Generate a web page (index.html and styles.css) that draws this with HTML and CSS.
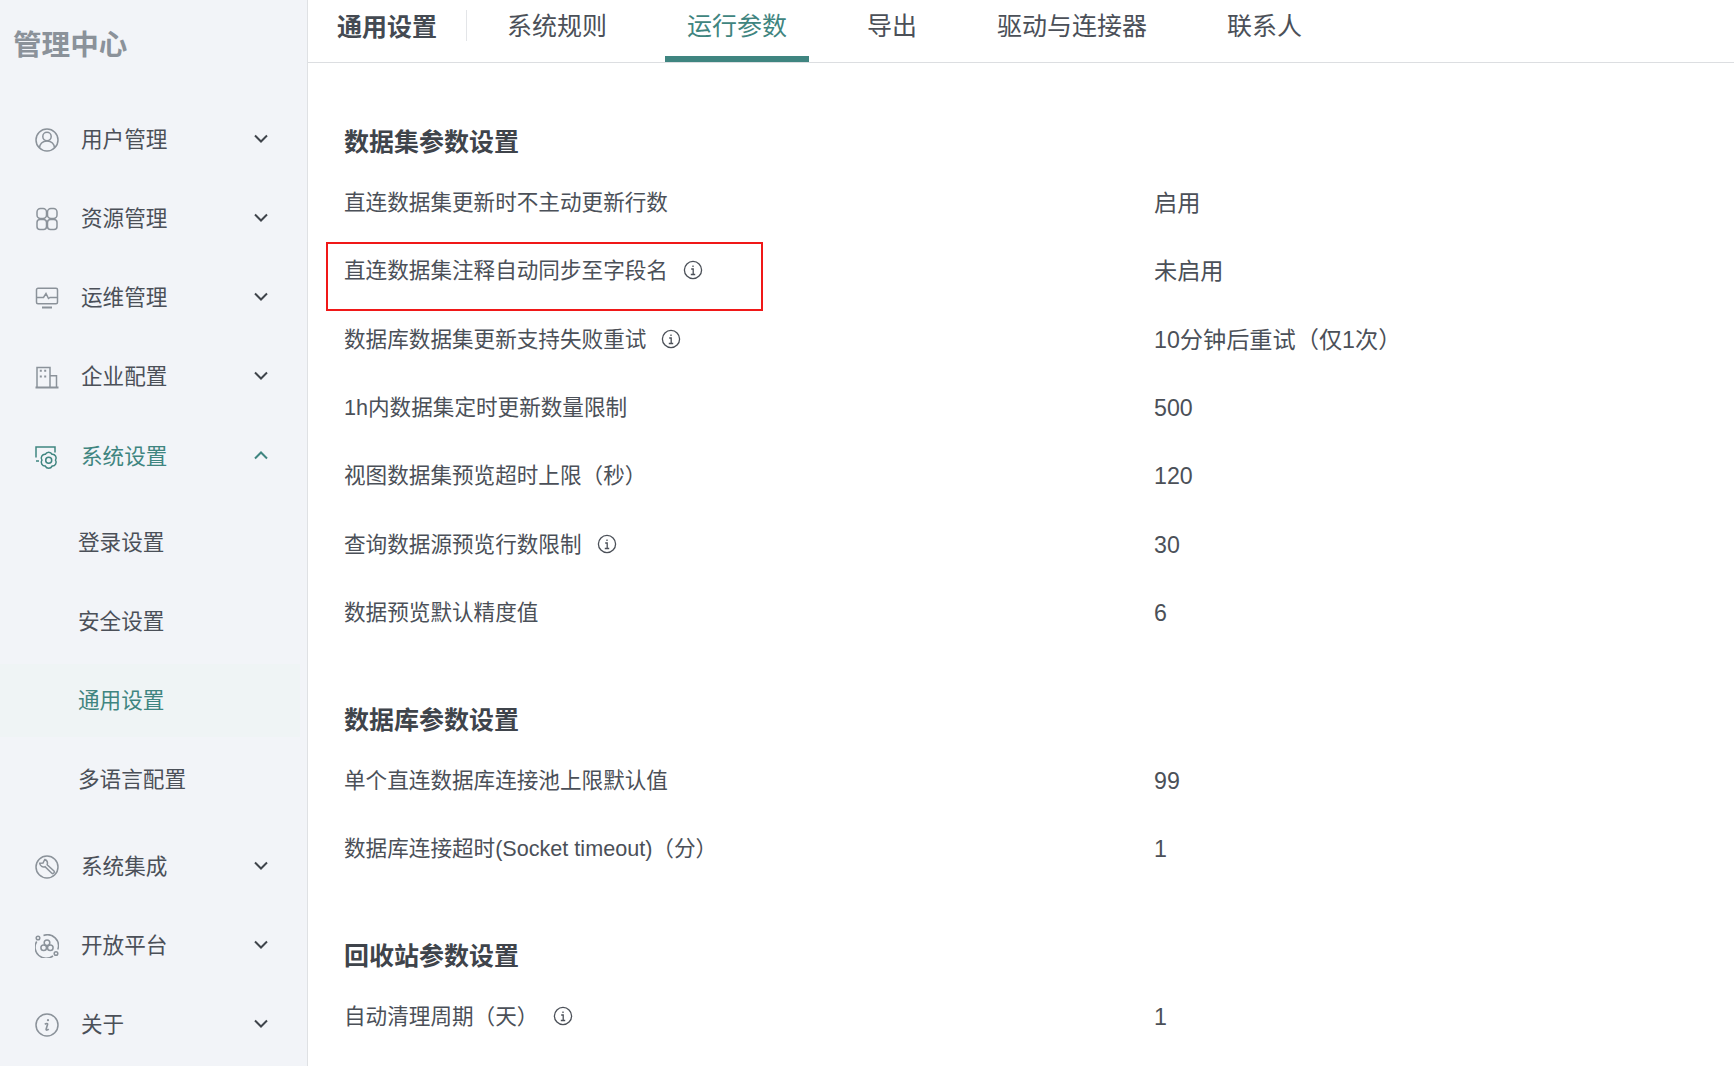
FILE: index.html
```html
<!DOCTYPE html>
<html lang="zh-CN">
<head>
    <meta charset="UTF-8">
    <title>管理中心</title>
    <link rel="stylesheet" href="styles.css">
</head>
<body>
    <div class="app">
        <aside class="sidebar">
            <div class="brand">管理中心</div>
            <ul class="menu">
                <li class="menu-item">
                    <svg class="menu-icon" viewBox="0 0 24 24"><circle cx="12" cy="12" r="11"/><circle cx="12" cy="8.500" r="4.200"/><path d="M4.500 20c0-4 3-7 7.500-7s7.500 3 7.500 7"/></svg>
                    <span class="menu-label">用户管理</span>
                    <svg class="chevron" viewBox="0 0 14 9"><path d="M1 1.500l6 6 6-6"/></svg>
                </li>
                <li class="menu-item">
                    <svg class="menu-icon" viewBox="0 0 24 24"><rect x="2" y="1.500" width="9.500" height="10" rx="3.500"/><rect x="12.500" y="1.500" width="9.500" height="10" rx="3.500"/><rect x="2" y="12.500" width="9.500" height="10" rx="3"/><rect x="12.500" y="12.500" width="9.500" height="10" rx="3"/></svg>
                    <span class="menu-label">资源管理</span>
                    <svg class="chevron" viewBox="0 0 14 9"><path d="M1 1.500l6 6 6-6"/></svg>
                </li>
                <li class="menu-item">
                    <svg class="menu-icon" viewBox="0 0 24 24"><rect x="1.500" y="2.300" width="21" height="15.500" rx="1.500"/><path d="M1.500 11.500h7l2.500-4 2.500 5 1.500-1h8"/><path d="M7 21.500h10" stroke-width="2"/></svg>
                    <span class="menu-label">运维管理</span>
                    <svg class="chevron" viewBox="0 0 14 9"><path d="M1 1.500l6 6 6-6"/></svg>
                </li>
                <li class="menu-item">
                    <svg class="menu-icon" viewBox="0 0 24 24"><path d="M.5 22.500h23" stroke-width="2"/><path d="M2 22V2.500h13V22M15 10.700h6.500V22"/><path d="M4.800 5.700h2M9.200 5.700h2M4.800 11.500h2M9.200 11.500h2" stroke-width="2"/></svg>
                    <span class="menu-label">企业配置</span>
                    <svg class="chevron" viewBox="0 0 14 9"><path d="M1 1.500l6 6 6-6"/></svg>
                </li>
                <li class="menu-item is-open">
                    <svg class="menu-icon" viewBox="0 0 24 24"><path d="M1 12.500V2h19v5.500M1 16h3"/><path d="M20.500 15.200A3.800 3.800 0 0 1 17.100 21.100 3.800 3.800 0 0 1 10.300 21.100 3.800 3.800 0 0 1 6.900 15.200 3.800 3.800 0 0 1 10.300 9.300 3.800 3.800 0 0 1 17.100 9.300 3.800 3.800 0 0 1 20.500 15.200z"/><circle cx="13.700" cy="15.200" r="3"/></svg>
                    <span class="menu-label">系统设置</span>
                    <svg class="chevron" viewBox="0 0 14 9"><path d="M1 7.500l6-6 6 6"/></svg>
                </li>
                <li>
                    <ul class="submenu">
                        <li class="submenu-item">登录设置</li>
                        <li class="submenu-item">安全设置</li>
                        <li class="submenu-item is-active">通用设置</li>
                        <li class="submenu-item">多语言配置</li>
                    </ul>
                </li>
                <li class="menu-item">
                    <svg class="menu-icon" viewBox="0 0 24 24"><circle cx="12" cy="12" r="11"/><path d="M10 4.500c1.900.9 2.800 3.300 2.200 5.300l6.800 6.200c1.200 1.400-.8 3.400-2.200 2.200l-6.800-6.500c-2.200.8-5-.4-5.300-3.500l3.300-.2 2-4z"/></svg>
                    <span class="menu-label">系统集成</span>
                    <svg class="chevron" viewBox="0 0 14 9"><path d="M1 1.500l6 6 6-6"/></svg>
                </li>
                <li class="menu-item">
                    <svg class="menu-icon" viewBox="0 0 24 24"><path d="M8.500 1.500A11 11 0 0 1 22.800 15.500M1.700 7.500A11 11 0 0 0 18 21.800"/><circle cx="3" cy="4" r="1.800"/><circle cx="21" cy="19.500" r="1.800"/><circle cx="12" cy="8.800" r="2.800"/><circle cx="8.700" cy="13.800" r="2.800"/><circle cx="15.300" cy="13.800" r="2.800"/></svg>
                    <span class="menu-label">开放平台</span>
                    <svg class="chevron" viewBox="0 0 14 9"><path d="M1 1.500l6 6 6-6"/></svg>
                </li>
                <li class="menu-item">
                    <svg class="menu-icon" viewBox="0 0 24 24"><circle cx="12" cy="12" r="11"/><circle class="icon-dot" cx="13" cy="7.200" r="1.100"/><path d="M9.800 11.300c1-.8 3-1.300 2.800 0l-1.500 5c-.2 1.300 1.500.8 2.600-.2" stroke-width="1.600"/></svg>
                    <span class="menu-label">关于</span>
                    <svg class="chevron" viewBox="0 0 14 9"><path d="M1 1.500l6 6 6-6"/></svg>
                </li>
            </ul>
        </aside>

        <main class="main">
            <nav class="tabs">
                <div class="tabs-title">通用设置</div>
                <div class="tab">系统规则</div>
                <div class="tab is-active">运行参数</div>
                <div class="tab">导出</div>
                <div class="tab">驱动与连接器</div>
                <div class="tab">联系人</div>
            </nav>

            <div class="content">
                <section class="group">
                    <h2>数据集参数设置</h2>
                    <div class="row"><div class="row-label">直连数据集更新时不主动更新行数</div><div class="row-value">启用</div></div>
                    <div class="row">
                        <div class="row-label">直连数据集注释自动同步至字段名
                            <svg class="info" viewBox="0 0 20 20"><circle cx="10" cy="10" r="8.600"/><path d="M10 5.600v1.400M8.200 9h2v5.500M7.800 14.500h4.400"/></svg>
                        </div>
                        <div class="row-value">未启用</div>
                        <span class="red-box"></span>
                    </div>
                    <div class="row">
                        <div class="row-label">数据库数据集更新支持失败重试
                            <svg class="info" viewBox="0 0 20 20"><circle cx="10" cy="10" r="8.600"/><path d="M10 5.600v1.400M8.200 9h2v5.500M7.800 14.500h4.400"/></svg>
                        </div>
                        <div class="row-value">10分钟后重试（仅1次）</div>
                    </div>
                    <div class="row"><div class="row-label">1h内数据集定时更新数量限制</div><div class="row-value">500</div></div>
                    <div class="row"><div class="row-label">视图数据集预览超时上限（秒）</div><div class="row-value">120</div></div>
                    <div class="row">
                        <div class="row-label">查询数据源预览行数限制
                            <svg class="info" viewBox="0 0 20 20"><circle cx="10" cy="10" r="8.600"/><path d="M10 5.600v1.400M8.200 9h2v5.500M7.800 14.500h4.400"/></svg>
                        </div>
                        <div class="row-value">30</div>
                    </div>
                    <div class="row"><div class="row-label">数据预览默认精度值</div><div class="row-value">6</div></div>
                </section>

                <section class="group">
                    <h2>数据库参数设置</h2>
                    <div class="row"><div class="row-label">单个直连数据库连接池上限默认值</div><div class="row-value">99</div></div>
                    <div class="row"><div class="row-label">数据库连接超时(Socket timeout)（分）</div><div class="row-value">1</div></div>
                </section>

                <section class="group">
                    <h2>回收站参数设置</h2>
                    <div class="row">
                        <div class="row-label">自动清理周期（天）
                            <svg class="info" viewBox="0 0 20 20"><circle cx="10" cy="10" r="8.600"/><path d="M10 5.600v1.400M8.200 9h2v5.500M7.800 14.500h4.400"/></svg>
                        </div>
                        <div class="row-value">1</div>
                    </div>
                </section>
            </div>
        </main>
    </div>
</body>
</html>
```

FILE: styles.css
```css
* {
    box-sizing: border-box;
}
html, body {
    height: 100%;
}
body {
    margin: 0;
    overflow: hidden;
    font-family: "Liberation Sans", "Noto Sans CJK SC", sans-serif;
    font-size: 21.6px;
    line-height: 30px;
    color: #4b5058;
    background-color: #fff;
}
ul {
    list-style: none;
    margin: 0;
    padding: 0;
}
.app {
    display: flex;
    height: 100%;
}

/* sidebar */
.sidebar {
    flex: 0 0 308px;
    height: 100%;
    background-color: #f2f4f8;
    border-right: 1px solid #dfe1e4;
}
.brand {
    height: 100px;
    padding: 25px 0 0 13px;
    line-height: 40px;
    font-size: 28.6px;
    font-weight: 700;
    color: #8b929a;
}
.menu-item {
    display: flex;
    align-items: center;
    height: 79px;
    padding-left: 35px;
}
.menu-icon {
    flex: 0 0 24px;
    width: 24px;
    height: 24px;
    margin-right: 22px;
    fill: none;
    stroke: #8b929a;
    stroke-width: 1.500;
}
.icon-dot {
    fill: #8b929a;
    stroke: none;
}
.menu-label {
    flex: 1;
}
.chevron {
    width: 14px;
    height: 9px;
    margin: -3px 39px 0 0;
    fill: none;
    stroke: #3f444b;
    stroke-width: 2;
}
.menu-item.is-open {
    padding-top: 2px;
    color: #3f8580;
}
.menu-item.is-open .menu-icon,
.menu-item.is-open .chevron {
    stroke: #3f8580;
}
.submenu {
    display: flex;
    flex-direction: column;
    gap: 6px;
    padding: 11px 7px 11px 0;
}
.submenu-item {
    display: flex;
    align-items: center;
    height: 73px;
    padding-left: 78px;
}
.submenu-item.is-active {
    background-color: #eff4f5;
    color: #3f8580;
}

/* top tabs */
.main {
    flex: 1;
    min-width: 0;
}
.tabs {
    display: flex;
    height: 63px;
    padding-left: 29px;
    border-bottom: 1px solid #dcdee1;
    font-size: 25px;
}
.tabs-title {
    position: relative;
    width: 129px;
    padding-top: 8px;
    line-height: 38px;
    font-weight: 700;
    color: #444a52;
}
.tabs-title::after {
    content: "";
    position: absolute;
    right: -1px;
    top: 10px;
    height: 31px;
    width: 1px;
    background-color: #e3e5e8;
}
.tab {
    height: 62px;
    margin-left: 19px;
    margin-right: 17px;
    padding: 7px 22px 0;
    line-height: 38px;
}
.tab.is-active {
    color: #3f8580;
    border-bottom: 6px solid #3f8580;
}

/* settings */
.content {
    padding-left: 36px;
}
.group {
    margin-bottom: 44.500px;
}
.group:first-child {
    padding-top: 50.600px;
}
.group h2 {
    margin: 0;
    height: 55px;
    line-height: 57px;
    font-size: 25px;
    font-weight: 700;
    color: #3f444b;
}
.row {
    position: relative;
    display: flex;
    align-items: center;
    height: 68.400px;
}
.row-label {
    display: flex;
    align-items: center;
    flex: 0 0 810px;
}
.row-value {
    font-size: 23.200px;
}
.info {
    width: 20px;
    height: 20px;
    margin: -2px 0 0 15px;
    fill: none;
    stroke: #4b5058;
    stroke-width: 1.300;
}
.red-box {
    position: absolute;
    left: -18px;
    top: 5px;
    width: 437px;
    height: 69px;
    border: 2px solid #f01818;
}
```
